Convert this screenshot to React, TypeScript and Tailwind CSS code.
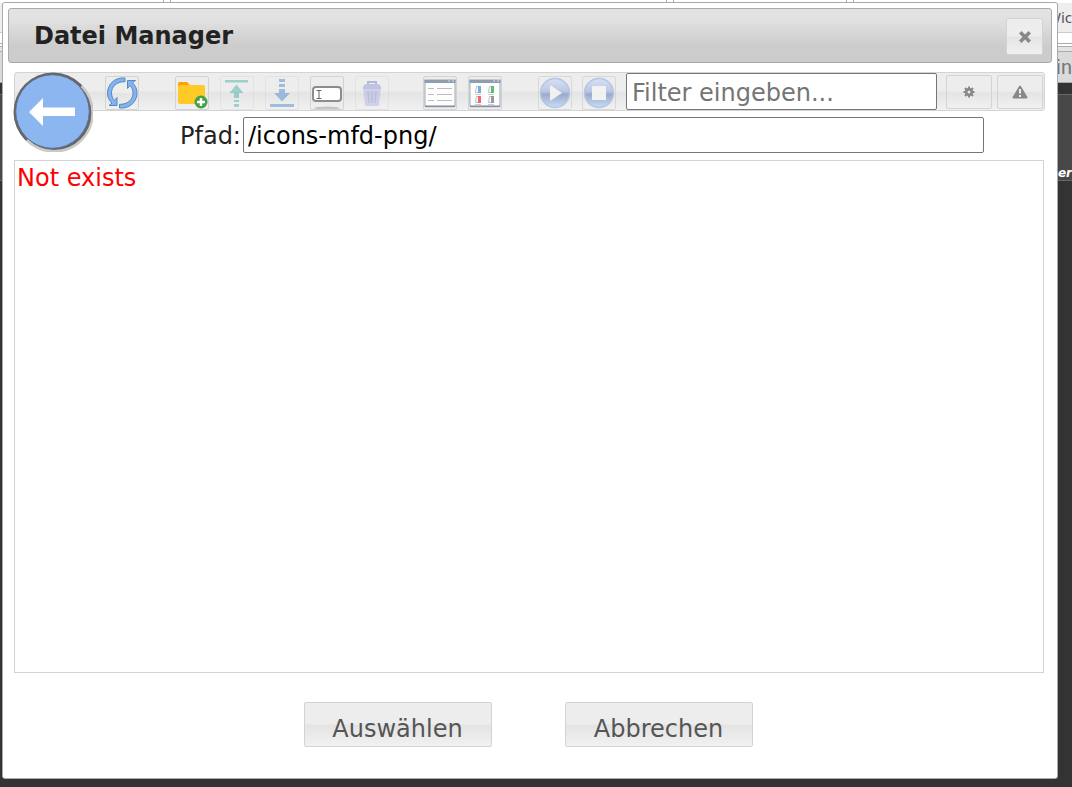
import type { ReactNode } from 'react';

const face = 'border border-[#d3d3d3] rounded-[2px] bg-[linear-gradient(#ededed_0%,#ededed_48%,#e4e4e4_52%,#f1f1f1_100%)]';

function ToolButton({ label, children, className = '', faded = false }: { label: string; children: ReactNode; className?: string; faded?: boolean }) {
  return (
    <button type="button" aria-label={label} disabled={faded} className={`${face} mt-[2px] flex h-[34px] w-[34px] shrink-0 items-center justify-center ${faded ? 'opacity-40' : ''} ${className}`}>
      {children}
    </button>
  );
}

function ArrowLeft() {
  return (
    <svg width="80" height="80" viewBox="0 0 80 80" aria-hidden="true">
      <circle cx="40" cy="40" r="39.500" fill="#666" />
      <path d="M68.500 14A38 38 0 0 1 14 68" fill="none" stroke="#c9c9c9" strokeWidth="2.500" />
      <circle cx="39.500" cy="39.500" r="36.800" fill="#8bb6f0" stroke="#5d6f8c" strokeWidth="1" />
      <path d="M16 40 30 26V35.500H62V44H30V54Z" fill="#fff" />
    </svg>
  );
}

function RefreshIcon() {
  return (
    <svg width="32" height="32" viewBox="0 0 32 32" fill="#84b3ee" stroke="#5787c4" strokeWidth="1" aria-hidden="true">
      <path d="M19 1C8 0 1.500 8 1.500 16C1.500 20 3 23.500 6 26L3 28.500H11V20.500L8.500 23.500C6.500 21.500 5.500 19 5.500 16C5.500 10 10 4.500 19 4.700Z" />
      <path d="M13.500 31C24.500 32 31 24 31 16C31 12 29.500 8.500 26.500 6L29.500 3.500H21.500V11.500L24 8.500C26 10.500 27 13 27 16C27 22 22.500 27.500 13.500 27.300Z" />
    </svg>
  );
}

function FolderIcon() {
  return (
    <svg width="32" height="32" viewBox="0 0 32 32" aria-hidden="true">
      <path d="M2 7Q2 5 4 5H11L14 8H26V12H2Z" fill="#ffa000" />
      <rect x="2" y="8" width="27" height="19" rx="2" fill="#ffca28" />
      <circle cx="25" cy="25" r="6.500" fill="#43a047" />
      <path d="M25 21V29M21 25H29" stroke="#fff" strokeWidth="2.500" />
    </svg>
  );
}

function UploadIcon() {
  return (
    <svg width="32" height="32" viewBox="0 0 32 32" fill="#26a69a" aria-hidden="true">
      <path d="M4 3H27V5.500H4ZM15.500 7.500 22.500 16H18V21H13V16H8.500ZM13 23H18V25H13ZM13 27H18V30H13Z" />
    </svg>
  );
}

function DownloadIcon() {
  return (
    <svg width="32" height="32" viewBox="0 0 32 32" fill="#2577c8" aria-hidden="true">
      <path d="M4 27H28V30H4ZM13 2H19V5H13ZM13 7H19V10H13ZM13 12H19V16H24L16 24.500 8 16H13Z" />
    </svg>
  );
}

function RenameIcon() {
  return (
    <svg width="32" height="32" viewBox="0 0 32 32" aria-hidden="true">
      <ellipse cx="16" cy="31" rx="13" ry="1.500" fill="#c4c4c4" />
      <rect x="2" y="10" width="28" height="14" rx="3" fill="#fff" stroke="#8c8c8c" strokeWidth="2" />
      <path d="M5.500 13.500H10.500M5.500 21.500H10.500M8 13.500V21.500" stroke="#666" fill="none" />
    </svg>
  );
}

function TrashIcon() {
  return (
    <svg width="32" height="32" viewBox="0 0 32 32" aria-hidden="true">
      <path d="M12 7V5H20V7" fill="none" stroke="#6670c0" strokeWidth="2" />
      <path d="M7 11H25L23 28Q23 29 22 29H10Q9 29 9 28Z" fill="#a3a9e6" />
      <path d="M9 7H23L25 10V12H7V10Z" fill="#8088d0" />
      <path d="M12 14 13 26M16 14V26M20 14 19 26" stroke="#7c84cc" strokeWidth="1.500" />
    </svg>
  );
}

function WindowFrame({ children }: { children: ReactNode }) {
  return (
    <svg width="32" height="32" viewBox="0 0 32 32" aria-hidden="true">
      <rect x="1" y="3" width="30" height="26" fill="#fdfdfd" stroke="#9aa7b5" />
      <path d="M.5 3H31.500V6H.5Z" fill="#8e9db0" />
      <path d="M24 4H26M28 4H30" stroke="#d8e0e8" />
      <path d="M1 29.500H31" stroke="#8793a1" strokeWidth="1.500" />
      {children}
    </svg>
  );
}

function ListIcon() {
  return (
    <WindowFrame>
      <path d="M4 11.500H10M13 11.500H28M4 17.500H10M13 17.500H28M4 23.500H10M13 23.500H28" stroke="#bdbdbd" />
    </WindowFrame>
  );
}

function TilesIcon() {
  return (
    <WindowFrame>
      <path d="M7.500 9.500H11V15.500H6.500ZM20.500 9.500H24V15.500H19.500ZM7.500 19.500H11V25.500H6.500ZM20.500 19.500H24V25.500H19.500Z" stroke="#b9bec4" fill="#fff" />
      <path d="M9 9H12V16H9Z" fill="#77ace0" />
      <path d="M22 9H25V16H22Z" fill="#58bd70" />
      <path d="M9 19H12V26H9Z" fill="#ed6672" />
      <path d="M22 19H25V26H22Z" fill="#999" />
      <path d="M6 17.500H12M19 17.500H25M6 27.500H12M19 27.500H25" stroke="#ccc" />
    </WindowFrame>
  );
}

function Orb({ id, children }: { id: string; children: ReactNode }) {
  return (
    <svg width="32" height="32" viewBox="0 0 32 32" aria-hidden="true">
      <defs>
        <linearGradient id={id} x1="0" y1="0" x2="0" y2="1">
          <stop offset="0" stopColor="#d4def5" />
          <stop offset=".46" stopColor="#adbce3" />
          <stop offset=".54" stopColor="#8c9ac6" />
          <stop offset="1" stopColor="#b9dcf7" />
        </linearGradient>
      </defs>
      <circle cx="16" cy="16" r="14.500" fill={`url(#${id})`} stroke="#a9bce2" strokeWidth="1.500" />
      {children}
    </svg>
  );
}

function GearIcon() {
  return (
    <svg width="12" height="12" viewBox="0 0 12 12" aria-hidden="true">
      <path d="M6 .5V3M6 9V11.500M.5 6H3M9 6H11.500M2 2 4 4M8 8 10 10M10 2 8 4M4 8 2 10" stroke="#888" strokeWidth="2" />
      <circle cx="6" cy="6" r="2.800" fill="none" stroke="#888" strokeWidth="2.600" />
    </svg>
  );
}

function AlertIcon() {
  return (
    <svg width="16" height="14" viewBox="0 0 16 14" aria-hidden="true">
      <path d="M8 1.500 14.500 12.500H1.500Z" fill="#888" stroke="#888" strokeWidth="2" strokeLinejoin="round" />
      <path d="M8 4V8.500M8 10V12" stroke="#eee" strokeWidth="2" />
    </svg>
  );
}

function Backdrop() {
  return (
    <div aria-hidden="true" className="absolute inset-0 flex flex-col overflow-hidden bg-[#333]">
      <div className="flex h-[3px] shrink-0 gap-[6px] bg-white">
        <div className="w-[164px] border-r border-[#aaa]" />
        <div className="w-[497px] border-x border-[#aaa]" />
        <div className="w-[174px] border-x border-[#aaa]" />
        <div className="flex-1 border-l border-[#aaa]" />
      </div>
      <div className="flex h-[30px] shrink-0 items-center justify-end border-b border-[#ccc] bg-[#eee] font-['Noto_Sans',sans-serif] text-[15px] text-[#555]">
        Wic
      </div>
      <div className="h-[11px] shrink-0 border-b border-[#aaa] bg-white" />
      <div className="h-[2px] shrink-0 bg-white" />
      <div className="h-[6px] shrink-0 border-y border-[#aaa] bg-[#e3e3e3]" />
      <div className="flex h-[31px] shrink-0 items-center justify-end border-b border-[#aaa] bg-[#dadada] font-['Roboto',sans-serif] text-[20px] text-[#777]">
        min
      </div>
      <div className="h-[11px] shrink-0 bg-[#333]" />
      <div className="flex h-[87px] shrink-0 items-end justify-end border-y border-[#666] bg-[#484848]">
        <span className="text-[12px] leading-[14px] font-bold text-white italic">er</span>
      </div>
    </div>
  );
}

export default function App() {
  return (
    <div className="relative flex min-h-screen flex-col pt-[2px] pr-[14px] pb-2 pl-[2px] font-['Verdana','DejaVu_Sans',sans-serif] text-[24px] text-[#222]">
      <Backdrop />
      <main role="dialog" aria-labelledby="dialog-title" className="relative flex flex-1 flex-col rounded-[3px] border border-[#aaa] bg-white p-[5px]">
        <header className="flex h-[55px] items-center justify-between rounded-[3px] border border-[#aaa] bg-[linear-gradient(#e3e3e3_0%,#e1e1e1_20%,#cccccc_70%,#cccccc_100%)] pr-2 pl-[25px]">
          <h1 id="dialog-title" className="text-[24px] font-bold">Datei Manager</h1>
          <button type="button" aria-label="Schließen" className={`${face} mt-[2px] flex h-[37px] w-[37px] items-center justify-center`}>
            <svg width="12" height="12" viewBox="0 0 12 12" aria-hidden="true">
              <path d="M2.500 2.500 9.500 9.500M9.500 2.500 2.500 9.500" stroke="#888" strokeWidth="3.500" strokeLinecap="square" />
            </svg>
          </button>
        </header>

        <section className="relative mt-[9px] mr-[7px] ml-[6px]">
          <div className="flex h-[39px] items-center rounded-[3px] border border-[#d3d3d3] bg-[linear-gradient(#ededed_0%,#ededed_48%,#e4e4e4_52%,#f1f1f1_100%)] pl-[90px]">
            <ToolButton label="Aktualisieren"><RefreshIcon /></ToolButton>
            <div className="ml-9 flex gap-[11px]">
              <ToolButton label="Neuer Ordner"><FolderIcon /></ToolButton>
              <ToolButton label="Hochladen" faded><UploadIcon /></ToolButton>
              <ToolButton label="Herunterladen" faded><DownloadIcon /></ToolButton>
              <ToolButton label="Umbenennen"><RenameIcon /></ToolButton>
              <ToolButton label="Löschen" faded><TrashIcon /></ToolButton>
            </div>
            <div className="ml-[34px] flex gap-[11px]">
              <ToolButton label="Liste"><ListIcon /></ToolButton>
              <ToolButton label="Kacheln"><TilesIcon /></ToolButton>
            </div>
            <div className="ml-9 flex gap-[10px]">
              <ToolButton label="Abspielen" className="opacity-80"><Orb id="orb-play"><path d="M11 8 23 16 11 24Z" fill="#f4f4f4" /></Orb></ToolButton>
              <ToolButton label="Stopp" className="opacity-80"><Orb id="orb-stop"><path d="M9 9H23V23H9Z" fill="#f4f4f4" /></Orb></ToolButton>
            </div>
            <input type="text" aria-label="Filter" placeholder="Filter eingeben..." className="ml-[10px] h-[37px] min-w-0 flex-1 rounded-[2px] border border-[#767676] bg-white px-[5px] pt-[2px] placeholder:text-[#757575]" />
            <div className="mr-px ml-[9px] flex gap-[5px]">
              <button type="button" aria-label="Einstellungen" className={`${face} flex h-[34px] w-[46px] items-center justify-center`}><GearIcon /></button>
              <button type="button" aria-label="Warnungen" className={`${face} flex h-[34px] w-[46px] items-center justify-center`}><AlertIcon /></button>
            </div>
          </div>
          <button type="button" aria-label="Zurück" className="absolute top-0 -left-px rounded-full"><ArrowLeft /></button>
          <div className="mt-[6px] flex h-9 items-center pr-[61px] pl-[166px]">
            <label htmlFor="path" className="w-[63px] pt-[2px]">Pfad:</label>
            <input id="path" type="text" defaultValue="/icons-mfd-png/" className="h-9 min-w-0 flex-1 rounded-[2px] border border-[#767676] bg-white px-1 pt-[2px] text-black" />
          </div>
        </section>

        <section className="mt-[7px] mr-2 ml-[6px] flex-1 border border-[#d3d3d3] px-[2px] text-[#f00]">
          <p className="leading-[34px]">Not exists</p>
        </section>

        <footer className="flex justify-center gap-[73px] pt-[29px] pr-1 pb-[26px]">
          <button type="button" className={`${face} h-[45px] w-[188px] pt-2 text-[#555]`}>Auswählen</button>
          <button type="button" className={`${face} h-[45px] w-[188px] pt-2 text-[#555]`}>Abbrechen</button>
        </footer>
      </main>
    </div>
  );
}
